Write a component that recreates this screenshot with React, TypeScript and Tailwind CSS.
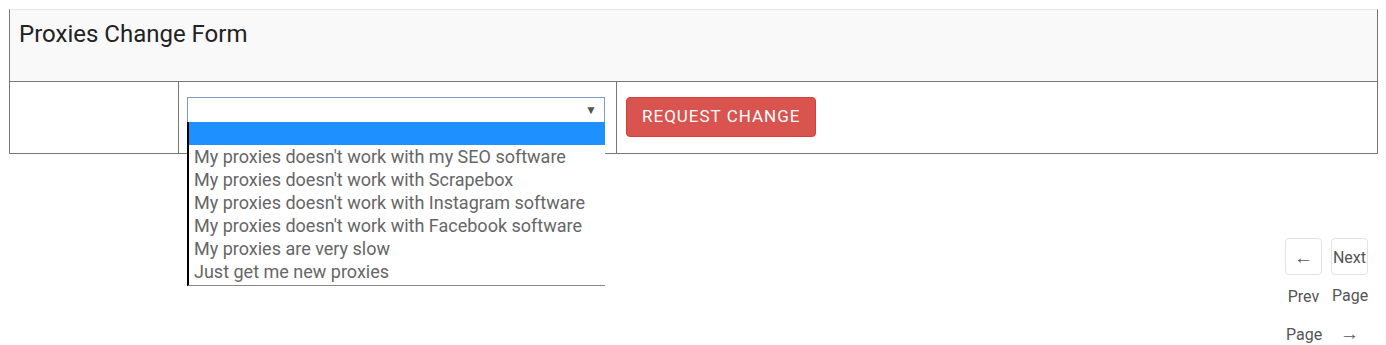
import React from 'react';

const reasons = [
  "My proxies doesn't work with my SEO software",
  "My proxies doesn't work with Scrapebox",
  "My proxies doesn't work with Instagram software",
  "My proxies doesn't work with Facebook software",
  'My proxies are very slow',
  'Just get me new proxies',
];

export default function App() {
  return (
    <div className="w-[1386px] h-[345px] bg-white overflow-hidden" style={{ fontFamily: 'Roboto, "Liberation Sans", sans-serif' }}>
      <div className="pt-[9px] pl-[9px] pr-[8px]">
        {/* header */}
        <div className="h-[72px] bg-[#f9f9f9] border-t border-t-[#e6e6e6] border-x border-x-[#777] px-[9px] pt-[10px]">
          <h2 className="text-[24px] leading-[28px] text-[#222]">Proxies Change Form</h2>
        </div>
        {/* form row */}
        <div className="grid grid-cols-[169px_438px_1fr] h-[73px] border border-[#777]">
          <div className="border-r border-[#777]" />
          <div className="border-r border-[#777] pl-[8px] pt-[15px] relative">
            <div className="w-[418px] h-[26px] border border-[#7d9bc4] bg-white flex items-center justify-end pr-[7px]">
              <span className="text-[12px] text-[#555]">▼</span>
            </div>
            <div className="absolute left-[8px] top-[40px] w-[418px] bg-white border-l-2 border-l-black border-b border-b-[#888] z-10">
              <div className="h-[23px] bg-[#1e90ff]" />
              <ul className="pb-[2px]">
                {reasons.map((r) => (
                  <li key={r} className="pl-[5px] text-[18px] leading-[23px] text-[#666] whitespace-nowrap">
                    {r}
                  </li>
                ))}
              </ul>
            </div>
          </div>
          <div className="pl-[9px] pt-[15px]">
            <button className="h-[40px] px-[15px] rounded-[4px] bg-[#d9534f] text-white text-[17px] tracking-[1px] border border-[#d43f3a]">
              REQUEST CHANGE
            </button>
          </div>
        </div>
      </div>
      {/* pagination */}
      <div className="flex justify-end gap-[9px] pr-[18px] mt-[84px]">
        <div className="w-[37px] h-[37px] border border-[#e3e3e3] rounded-[4px] text-center text-[16px] leading-[38px] text-[#555]">
          <span className="text-[19px]">←</span> Prev Page
        </div>
        <div className="w-[37px] h-[37px] border border-[#e3e3e3] rounded-[4px] text-center text-[16px] leading-[38px] text-[#555]">
          Next Page <span className="text-[19px]">→</span>
        </div>
      </div>
    </div>
  );
}
